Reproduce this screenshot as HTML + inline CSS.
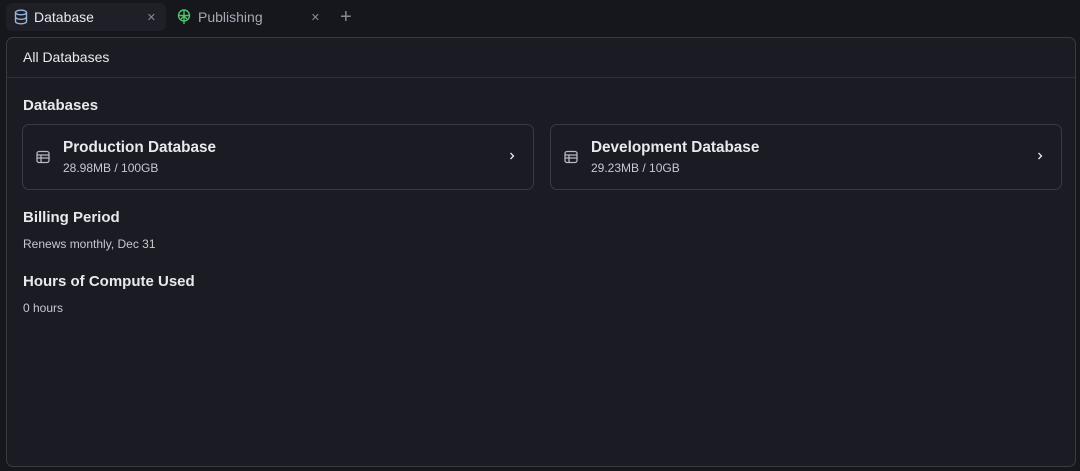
<!DOCTYPE html>
<html><head><style>
*{box-sizing:border-box;margin:0;padding:0}
body{width:1080px;height:471px;background:#16161d;font-family:"Liberation Sans",sans-serif;color:#e8e8ee;position:relative;overflow:hidden}
.tab{position:absolute;top:3px;height:28px;border-radius:6px;display:flex;align-items:center;font-size:14px}
.t1{left:6px;width:160px;background:#1f1f28;color:#e8e8ee}
.t2{left:170px;width:160px;color:#a8a8b4}
.x{position:absolute;right:10px;font-size:11px;color:#8a8a96}
.panel{position:absolute;left:6px;top:37px;width:1070px;height:430px;background:#1b1b23;border:1px solid #3a3a44;border-radius:7px}
.hdr{height:40px;border-bottom:1px solid #30303a;padding:11px 16px;font-size:14px}
h2{position:absolute;left:16px;font-size:15px;font-weight:bold}
.sm{position:absolute;left:16px;font-size:12px;color:#c8c8d0}
.card{position:absolute;top:86px;width:512px;height:66px;border:1px solid #3a3a44;border-radius:7px}
.card .t{position:absolute;left:40px;top:14px;font-size:15.3px;font-weight:bold}
.card .s{position:absolute;left:40px;top:36px;font-size:12px;color:#c8c8d0}
.card svg.i{position:absolute;left:13px;top:25px}
.card .ch{position:absolute;right:16px;top:25px}
</style></head><body>
<div class="tab t1"><svg style="margin:0 6px 0 8px" width="14" height="16" viewBox="0 0 14 16" fill="none" stroke="#9ab4d8" stroke-width="1.4"><ellipse cx="7" cy="3.5" rx="5.5" ry="2.3"/><path d="M1.5 3.5v9c0 1.3 2.5 2.3 5.5 2.3s5.5-1 5.5-2.3v-9M1.5 8c0 1.3 2.5 2.3 5.5 2.3s5.5-1 5.5-2.3"/></svg>Database<span class="x">✕</span></div>
<div class="tab t2"><svg style="margin:0 6px 0 6px" width="16" height="16" viewBox="0 0 16 16" fill="none" stroke="#4cc26a" stroke-width="1.4"><circle cx="8" cy="6.5" r="5.5"/><path d="M2.5 6.5h11M8 1v14M5 10l3-3 3 3"/></svg>Publishing<span class="x">✕</span></div>
<div style="position:absolute;left:340px;top:6px;font-size:20px;color:#8a8a96">+</div>
<div class="panel">
<div class="hdr">All Databases</div>
<h2 style="top:59px">Databases</h2>
<div class="card" style="left:15px"><svg class="i" width="14" height="14" viewBox="0 0 14 14" fill="none" stroke="#b8b8c4" stroke-width="1.3"><rect x="1" y="1.5" width="12" height="11" rx="2"/><path d="M1 5h12M1 8h12M5 5v7.5"/></svg><div class="t">Production Database</div><div class="s">28.98MB / 100GB</div><svg class="ch" width="10" height="12" viewBox="0 0 10 12" fill="none" stroke="#e8e8ee" stroke-width="1.3"><path d="M3.5 3l3 3-3 3"/></svg></div>
<div class="card" style="left:543px"><svg class="i" width="14" height="14" viewBox="0 0 14 14" fill="none" stroke="#b8b8c4" stroke-width="1.3"><rect x="1" y="1.5" width="12" height="11" rx="2"/><path d="M1 5h12M1 8h12M5 5v7.5"/></svg><div class="t">Development Database</div><div class="s">29.23MB / 10GB</div><svg class="ch" width="10" height="12" viewBox="0 0 10 12" fill="none" stroke="#e8e8ee" stroke-width="1.3"><path d="M3.5 3l3 3-3 3"/></svg></div>
<h2 style="top:171px">Billing Period</h2>
<div class="sm" style="top:199px">Renews monthly, Dec 31</div>
<h2 style="top:235px">Hours of Compute Used</h2>
<div class="sm" style="top:263px">0 hours</div>
</div>
</body></html>
